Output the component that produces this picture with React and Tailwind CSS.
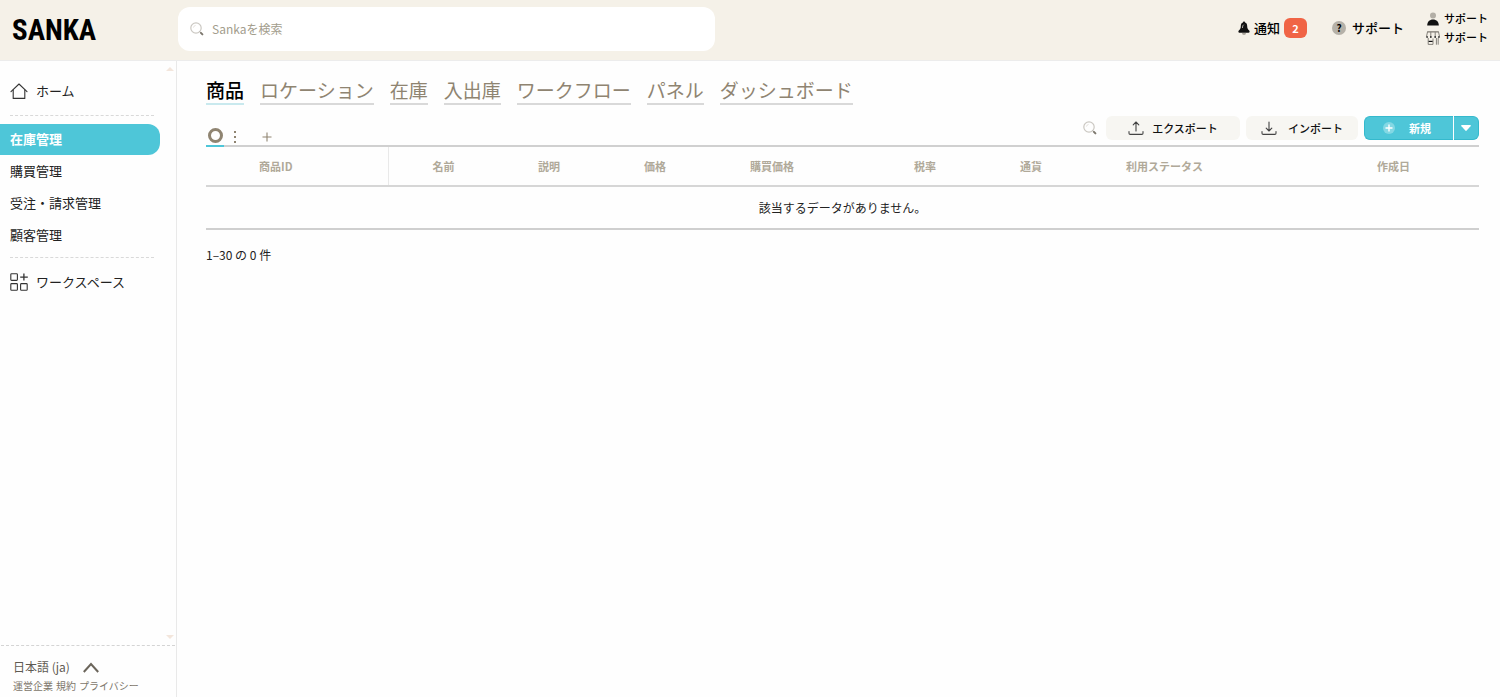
import React, { useState } from 'react';

const NAV_ITEMS = ['在庫管理', '購買管理', '受注・請求管理', '顧客管理'];

const TABS = ['商品', 'ロケーション', '在庫', '入出庫', 'ワークフロー', 'パネル', 'ダッシュボード'];

const COLUMNS = [
  { label: '商品ID', className: 'w-[182px] pl-[53px] border-r border-r-[#e9e9e9]' },
  { label: '名前', className: 'w-[106px] pl-11' },
  { label: '説明', className: 'w-[106px] pl-11' },
  { label: '価格', className: 'w-[106px] pl-11' },
  { label: '購買価格', className: 'w-[164px] pl-11' },
  { label: '税率', className: 'w-[106px] pl-11' },
  { label: '通貨', className: 'w-[106px] pl-11' },
  { label: '利用ステータス', className: 'w-[251px] pl-11' },
  { label: '作成日', className: 'pl-11' }
];

const SearchIcon = () => (
  <svg viewBox="0 0 14 14" className="w-3.5 h-3.5 shrink-0" fill="none">
    <circle cx="6" cy="6" r="5.2" stroke="#cbc8c2" strokeWidth="1.2" />
    <path d="M3.4 5.6A2.7 2.7 0 0 1 5.6 3.4" stroke="#dedbd6" strokeWidth="0.8" />
    <path d="M9.6 9.6l1 1" stroke="#b5b1a8" strokeWidth="1" />
    <path d="M10.9 10.9l1.5 1.5" stroke="#7d786e" strokeWidth="2" strokeLinecap="round" />
  </svg>
);

const HomeIcon = () => (
  <svg viewBox="0 0 18 18" className="w-[18px] h-[18px]" fill="none" stroke="#333" strokeWidth="1.1" strokeLinejoin="round" strokeLinecap="round">
    <path d="M1 9.6L9 2l8 7.6" />
    <path d="M3.2 8v8.4h11.6V8" />
  </svg>
);

const WorkspaceIcon = () => (
  <svg viewBox="0 0 18 18" className="w-[18px] h-[18px]" fill="none" stroke="#333" strokeWidth="1.1">
    <rect x="0.8" y="0.8" width="6.6" height="6.6" rx="0.8" />
    <rect x="0.8" y="10.6" width="6.6" height="6.6" rx="0.8" />
    <rect x="10.6" y="10.6" width="6.6" height="6.6" rx="0.8" />
    <path d="M13.9 0.6v7M10.2 4.2h7.6" strokeWidth="1.3" />
  </svg>
);

const BellIcon = () => (
  <svg viewBox="0 0 12 16" className="w-3 h-4">
    <path d="M4 13h4a2 2 0 0 1-4 0z" fill="#a9a49b" />
    <path d="M6 1.6c.6 0 1 .4 1 1 1.6.5 2.2 1.9 2.2 3.6 0 2.3.8 3.2 2 4.3.8.8.4 2.2-.6 2.3H1.4c-1-.1-1.4-1.5-.6-2.3 1.2-1.1 2-2 2-4.3C2.8 4.5 3.4 3.1 5 2.6c0-.6.4-1 1-1z" fill="#111" />
    <path d="M4.5 8c0-1.6.3-2.6 1.2-3.3" stroke="#c4c0b7" strokeWidth="0.9" fill="none" />
  </svg>
);

const UserIcon = () => (
  <svg viewBox="0 0 14 14" className="w-3.5 h-3.5">
    <circle cx="7" cy="3.4" r="3" fill="#b3afa6" />
    <path d="M1.2 13.6C1.2 9.8 3.5 7.6 7 7.6s5.8 2.2 5.8 6z" fill="#111" />
  </svg>
);

const ShopIcon = () => (
  <svg viewBox="0 0 14 14" className="w-3.5 h-3.5" fill="none" stroke="#85817a" strokeWidth="1">
    <path d="M1.2.9h11.6" stroke="#5e5a53" />
    <path d="M1.5.9L.5 5.5M4.8.9v5.5M9.2.9v5.5M12.5.9l1 4.6" />
    <path d="M.3 6h1.6M4 6h1.6M8.400 6H10M12.100 6h1.600" stroke="#222" strokeWidth="1.6" />
    <path d="M2.200 7v6.400h4.800V7.500M10.400 7v6.700M12.200 7v6.700" />
    <path d="M2.600 10.400h4" stroke="#111" strokeWidth="1.2" />
  </svg>
);

const TransferIcon = ({ up }) => (
  <svg viewBox="0 0 16 14" className="w-4 h-3.5" fill="none" stroke="#444" strokeWidth="1.1" strokeLinecap="round" strokeLinejoin="round">
    <path d="M1 10.5v1.7c0 .8.4 1.2 1.2 1.2h11.6c.8 0 1.2-.4 1.2-1.2v-1.7" />
    {up ? <path d="M8 10V1M5.2 3.8L8 1l2.8 2.8" /> : <path d="M8 1v9M5.2 7.2L8 10l2.8-2.8" />}
  </svg>
);

const Header = () => (
  <header className="flex items-center h-[61px] shrink-0 bg-[#f5f1e8] border-b border-[#ececec]">
    <a href="#" className="w-[178px] shrink-0 pl-3 font-['Roboto_Condensed','Roboto',sans-serif] font-bold text-[29px] leading-8 text-black">
      SANKA
    </a>
    <label className="flex items-center gap-2 w-[537px] h-11 px-3 -mt-0.5 rounded-xl bg-white">
      <SearchIcon />
      <input
        type="search"
        aria-label="検索"
        placeholder="Sankaを検索"
        className="grow min-w-0 text-xs outline-none bg-transparent placeholder:text-[#a39d8d] placeholder:opacity-100"
      />
    </label>
    <div className="flex items-center ml-auto pr-3 text-[13px] font-medium text-black -mt-1">
      <button className="flex items-center gap-1">
        <BellIcon />
        <span>通知</span>
        <span className="flex items-center justify-center w-[23px] h-5 rounded-md bg-[#f06445] text-[11px] font-bold text-white">2</span>
      </button>
      <a href="#" className="flex items-center gap-1.5 ml-[25px]">
        <span className="flex items-center justify-center w-3.5 h-3.5 rounded-full bg-[#b5b1a8] text-[10px] leading-none font-bold">?</span>
        サポート
      </a>
      <div className="flex flex-col ml-[22px] text-[11px] leading-[19px]">
        <a href="#" className="flex items-center gap-1"><UserIcon />サポート</a>
        <a href="#" className="flex items-center gap-1"><ShopIcon />サポート</a>
      </div>
    </div>
  </header>
);

const Sidebar = () => {
  const [active, setActive] = useState('在庫管理');

  return (
    <aside className="flex flex-col w-[177px] shrink-0 border-r border-[#e9e9e9] text-[13px] text-[#222]">
      <div className="flex grow">
        <nav className="w-40 pt-3.5">
          <a href="#" className="flex items-center gap-2 h-8 pl-2.5"><HomeIcon />ホーム</a>
          <hr className="ml-2.5 mr-1.5 my-2 border-dashed border-[#d9d9d9]" />
          <div className="flex flex-col gap-px">
            {NAV_ITEMS.map((item) => (
              <button
                key={item}
                onClick={() => setActive(item)}
                className={`h-[31px] pl-2.5 pb-0.5 text-left rounded-r-xl ${active === item ? 'bg-[#4ec6d8] text-white font-bold' : ''}`}
              >
                {item}
              </button>
            ))}
          </div>
          <hr className="ml-2.5 mr-1.5 mt-1.5 mb-2 border-dashed border-[#d9d9d9]" />
          <a href="#" className="flex items-center gap-2 h-8 pl-2.5"><WorkspaceIcon />ワークスペース</a>
        </nav>
        <div className="flex flex-col justify-between items-center grow pl-1 py-1.5">
          <svg viewBox="0 0 8 4" className="w-2 h-1"><path d="M0 4l4-4 4 4z" fill="#f3e6dc" /></svg>
          <svg viewBox="0 0 8 4" className="w-2 h-1"><path d="M0 0l4 4 4-4z" fill="#f3e6dc" /></svg>
        </div>
      </div>
      <div className="mx-px pt-3 pb-px pl-3 border-t border-dashed border-[#d4d4d4] text-[#7d766b]">
        <div className="flex items-center gap-3 h-[18px]">
          <select aria-label="言語" className="appearance-none text-xs text-[#5f5a52] outline-none">
            <option>日本語 (ja)</option>
          </select>
          <svg viewBox="0 0 16 11" className="w-4 h-[11px]" fill="none" stroke="#6b655b" strokeWidth="2">
            <path d="M0.8 10L8 2l7.2 8" />
          </svg>
        </div>
        <div className="flex gap-[3px] text-[10px] leading-5">
          <a href="#">運営企業</a>
          <a href="#">規約</a>
          <a href="#">プライバシー</a>
        </div>
      </div>
    </aside>
  );
};

const Toolbar = () => (
  <div className="flex items-end justify-between border-b-2 border-[#d0d0d0]">
    <div className="flex items-center h-[21px] -mb-0.5 text-[#8f8471]">
      <button aria-label="ビュー" className="flex items-start justify-center w-[18px] h-[21px] pt-0.5 border-b-2 border-[#4ec6d8]">
        <span className="w-[15px] h-[15px] rounded-full border-3 border-[#8f8471]" />
      </button>
      <button aria-label="メニュー" className="flex flex-col gap-[3px] ml-2.5">
        <span className="w-0.5 h-0.5 bg-[#8f8471]" />
        <span className="w-0.5 h-0.5 bg-[#8f8471]" />
        <span className="w-0.5 h-0.5 bg-[#8f8471]" />
      </button>
      <button aria-label="追加" className="ml-[26px]">
        <svg viewBox="0 0 10 10" className="w-2.5 h-2.5" stroke="#8f8471" strokeWidth="1.1"><path d="M5 .5v9M.5 5h9" /></svg>
      </button>
    </div>
    <div className="flex items-center gap-1.5 pb-[5px] text-[11px] font-medium text-[#111]">
      <button aria-label="検索" className="mr-[3px]"><SearchIcon /></button>
      <button className="flex items-center justify-center gap-2 w-[134px] h-6 rounded-md bg-[#f7f6f2]">
        <TransferIcon up />エクスポート
      </button>
      <button className="flex items-center justify-center gap-[11px] w-28 h-6 rounded-md bg-[#f7f6f2]">
        <TransferIcon />インポート
      </button>
      <div className="flex h-6 gap-px">
        <button className="flex items-center justify-center gap-3.5 w-[89px] pr-1 rounded-l-md bg-[#4ec6d8] border border-r-0 border-[#35b9cd] font-bold text-white">
          <svg viewBox="0 0 12 12" className="w-3 h-3">
            <circle cx="6" cy="6" r="6" fill="#83d8e4" />
            <path d="M6 2.5v7M2.5 6h7" stroke="#fff" strokeWidth="1.4" />
          </svg>
          新規
        </button>
        <button aria-label="その他" className="flex items-center justify-center w-[25px] rounded-r-md bg-[#4ec6d8] border border-l-0 border-[#35b9cd]">
          <svg viewBox="0 0 10 6" className="w-2.5 h-1.5"><path d="M1 0h8c.8 0 1 .6.5 1.2L5.7 5.6c-.4.4-1 .4-1.4 0L.5 1.2C0 .6.2 0 1 0z" fill="#fff" /></svg>
        </button>
      </div>
    </div>
  </div>
);

const App = () => {
  const [tab, setTab] = useState('商品');

  return (
    <div className="flex flex-col min-h-screen bg-[#fefefe] font-['Noto_Sans_CJK_JP',sans-serif]">
      <Header />
      <div className="flex grow">
        <Sidebar />
        <main className="grow min-w-0 pl-[29px] pr-[21px] pt-4">
          <div className="flex gap-4 mb-[11px] text-[19px] leading-[26px]">
            {TABS.map((name) => (
              <button
                key={name}
                onClick={() => setTab(name)}
                className={`border-b-2 ${tab === name ? 'font-medium text-black border-[#c9e9ee]' : 'text-[#8f8471] border-[#d9d9d9]'}`}
              >
                {name}
              </button>
            ))}
          </div>
          <Toolbar />
          <table className="w-full table-fixed text-left">
            <thead>
              <tr className="border-b-2 border-[#d6d6d6]">
                {COLUMNS.map((col) => (
                  <th key={col.label} className={`h-[39px] text-[11px] font-bold text-[#b0a999] ${col.className}`}>{col.label}</th>
                ))}
              </tr>
            </thead>
            <tbody>
              <tr className="border-b-2 border-[#cfcfcf]">
                <td colSpan={COLUMNS.length} className="h-[43px] text-center text-xs text-[#222]">
                  該当するデータがありません。
                </td>
              </tr>
            </tbody>
          </table>
          <p className="mt-4 text-xs leading-[18px] text-[#222]">1–30 の 0 件</p>
        </main>
      </div>
    </div>
  );
};

export default App;
